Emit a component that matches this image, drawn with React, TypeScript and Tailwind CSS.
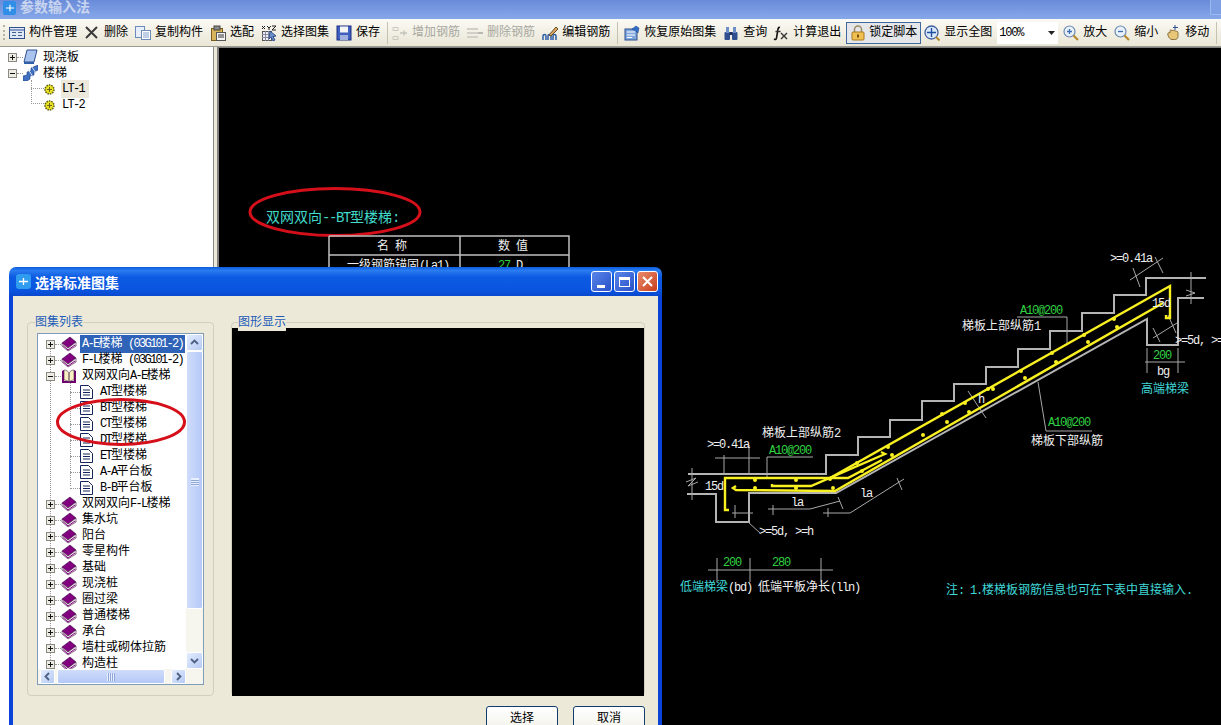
import type { ReactNode } from "react";

const FONT = "font-['Liberation_Mono','Noto_Sans_CJK_SC',monospace]";

// ascii chars are squeezed so mixed text lines up like the scaled bitmap font in the shot
function Txt({ t }: { t: string }) {
  return (
    <>
      {t.split(/([\x00-\x7f]+)/).filter(Boolean).map((s, i) =>
        /[\x00-\x7f]/.test(s) ? (
          <span key={i} className="tracking-[-1.7px]">{s}</span>
        ) : (
          <span key={i}>{s}</span>
        ),
      )}
    </>
  );
}

function Label({ x, y, t, fill = "#f0f0f0", big }: { x: number; y: number; t: string; fill?: string; big?: boolean }) {
  return (
    <text x={x} y={y} fill={fill} className={`${FONT} ${big ? "text-[14px]" : "text-[12px]"}`}>
      {t.split(/([\x00-\x7f]+)/).filter(Boolean).map((s, i) => (
        <tspan key={i} className={/[\x00-\x7f]/.test(s) ? (big ? "tracking-[-1.4px]" : "tracking-[-1.2px]") : ""}>
          {s}
        </tspan>
      ))}
    </text>
  );
}

const Ico = ({ children }: { children: ReactNode }) => (
  <svg viewBox="0 0 16 16" className="w-4 h-4 shrink-0">{children}</svg>
);

const icons: Record<string, ReactNode> = {
  manage: (
    <Ico>
      <rect x="0.5" y="2.5" width="15" height="11" fill="#dfe8f6" stroke="#2f4f8f" />
      <path d="M1 5h14" stroke="#2f4f8f" />
      <path d="M3 7.5h4M3 10.5h4M9 7.5h4M9 10.5h4" stroke="#44608f" />
    </Ico>
  ),
  del: <Ico><path d="M2 2l11 11M13 2L2 13" stroke="#3a3a3a" strokeWidth="2" /></Ico>,
  copy: (
    <Ico>
      <rect x="0.5" y="1.5" width="9" height="11" fill="#e6effa" stroke="#6d8bb8" />
      <rect x="6.5" y="5.5" width="9" height="9" fill="#fff" stroke="#6d8bb8" />
      <path d="M8 8h6M8 10h6M8 12h6" stroke="#7f9fd0" />
    </Ico>
  ),
  match: (
    <Ico>
      <rect x="1.5" y="3.5" width="11" height="12" fill="#d8b45a" stroke="#7a5c1c" />
      <rect x="4" y="1" width="6" height="4" fill="#8a8a8a" stroke="#444" />
      <rect x="6.5" y="7.5" width="9" height="8" fill="#f4f4f4" stroke="#555" />
      <path d="M8 10h6M8 12h6" stroke="#333" />
    </Ico>
  ),
  atlas: (
    <Ico>
      <path d="M1 1l3 3M4 1L1 4M6 1l2 2 2-2M8 3v2M11 1h4l-4 4h4" stroke="#222" fill="none" />
      <rect x="1.5" y="6.5" width="9" height="9" fill="#eef" stroke="#555" />
      <path d="M1 9.5h10M1 12.5h10M4.5 6v10M7.5 6v10" stroke="#889" />
      <path d="M9 6l6 5-3 .5 2 3.5-2 1-2-4-2 2z" fill="#6d8fc8" stroke="#2f4f8f" />
    </Ico>
  ),
  save: (
    <Ico>
      <rect x="1" y="1" width="14" height="14" fill="#3f5fc0" stroke="#1c2f80" />
      <rect x="4" y="1.5" width="8" height="6" fill="#f4f4f4" />
      <rect x="4" y="10" width="8" height="5" fill="#9fb0dc" />
    </Ico>
  ),
  addBar: (
    <Ico>
      <path d="M1 2.5h5v3H1zM1 11.5h5v3H1z" fill="none" stroke="#c8c8c0" />
      <path d="M8 8h7M12 5.5v5" stroke="#c4c4bc" strokeWidth="1.5" />
    </Ico>
  ),
  delBar: (
    <Ico>
      <path d="M0 3h11v2H0zM0 7h11v2H0zM0 11h11v2H0z" fill="#d0d0c8" />
      <path d="M11 8h5" stroke="#b8b8b0" strokeWidth="2" />
    </Ico>
  ),
  editBar: (
    <Ico>
      <path d="M1 15v-4c0-2 3-2 3 0v4M6 15v-4c0-2 3-2 3 0v4M11 15v-4c0-2 3-2 3 0v4" fill="none" stroke="#2f5fa8" strokeWidth="1.5" />
      <path d="M7 10l7-8 2 2-7 7z" fill="#d8a868" stroke="#6b4a20" />
    </Ico>
  ),
  restore: (
    <Ico>
      <rect x="1" y="4" width="12" height="11" fill="#7fa7dc" stroke="#2f4f8f" />
      <path d="M3 7h8M3 10h8M3 12.5h5" stroke="#fff" />
      <path d="M8 4l4-3 3 2-1 5-2-2z" fill="#2f6fc8" stroke="#1c3f80" strokeWidth="0.5" />
    </Ico>
  ),
  query: (
    <Ico>
      <rect x="1.5" y="7" width="5.5" height="8" rx="1" fill="#2f4f8f" />
      <rect x="9" y="7" width="5.5" height="8" rx="1" fill="#2f4f8f" />
      <rect x="3" y="2" width="3" height="6" fill="#6d8fc8" />
      <rect x="10" y="2" width="3" height="6" fill="#6d8fc8" />
      <rect x="6.5" y="7" width="3" height="3" fill="#1c2f60" />
    </Ico>
  ),
  fx: (
    <Ico>
      <path d="M7 2.5C5 2 5 4 4.5 7L3.5 13C3 15 2 14.5 1 14" fill="none" stroke="#111" strokeWidth="1.6" />
      <path d="M2.5 6.5h5M8 8l6 6M14 8l-6 6" stroke="#333" strokeWidth="1.4" />
    </Ico>
  ),
  lock: (
    <Ico>
      <path d="M4.5 7V4.5a3.5 3.5 0 017 0V7" fill="none" stroke="#9a8a60" strokeWidth="1.5" />
      <rect x="2" y="7" width="12" height="8" rx="1" fill="#f0c050" stroke="#a87820" />
      <rect x="7" y="9.5" width="2" height="3" fill="#7a5010" />
    </Ico>
  ),
  fit: (
    <Ico>
      <circle cx="7.5" cy="7.5" r="6.5" fill="#dbe8fa" stroke="#40609f" strokeWidth="1.3" />
      <path d="M7.5 3v9M3 7.5h9" stroke="#1f4f9f" strokeWidth="1.4" />
      <path d="M12 12l3.5 3.5" stroke="#b88a30" strokeWidth="2" />
    </Ico>
  ),
  zoomIn: (
    <Ico>
      <circle cx="6.5" cy="6.5" r="5.5" fill="#e8f0fa" stroke="#6d8bb0" strokeWidth="1.2" />
      <path d="M4 6.5h5M6.5 4v5" stroke="#3f6fb0" strokeWidth="1.3" />
      <path d="M10.5 10.5l4.5 4.5" stroke="#b88a30" strokeWidth="2.2" />
    </Ico>
  ),
  zoomOut: (
    <Ico>
      <circle cx="6.5" cy="6.5" r="5.5" fill="#e8f0fa" stroke="#6d8bb0" strokeWidth="1.2" />
      <path d="M4 6.5h5" stroke="#3f6fb0" strokeWidth="1.3" />
      <path d="M10.5 10.5l4.5 4.5" stroke="#b88a30" strokeWidth="2.2" />
    </Ico>
  ),
  move: (
    <Ico>
      <path d="M3 10c-1-2 1-3 2-2V6c0-1.500 2-1.500 2 0 0-1 2-1 2 0 0-.5 2-.5 2 .5 1-.5 2 0 2 1v4c0 2-1.500 3-3.500 3H7c-2 0-3-2-4-4z" fill="#e8c878" stroke="#8a7040" />
      <path d="M10 0v5M8 2.500h5" stroke="#2f4f8f" />
    </Ico>
  ),
};

type Tool = { icon: string; label: string; off?: boolean; cls?: string };

function ToolItem({ icon, label, off, cls = "" }: Tool) {
  return (
    <div className={`flex items-center gap-1 shrink-0 ${off ? "text-[#a8a8a0]" : "text-black"} ${cls}`}>
      {icons[icon]}
      <span>{label}</span>
    </div>
  );
}

const Sep = ({ cls = "" }: { cls?: string }) => <div className={`w-px h-[22px] bg-[#c5c2b0] shrink-0 ${cls}`} />;

function Toolbar() {
  return (
    <div className={`h-[27px] shrink-0 flex items-center gap-[7px] pl-[9px] text-[12px] overflow-hidden relative bg-linear-to-b from-[#fbfaf4] to-[#e9e6d6] ${FONT}`}>
      <div className="absolute left-[3px] top-[6px] h-[15px] w-[2px] border-l-2 border-dotted border-[#b5b29f]" />
      <ToolItem icon="manage" label="构件管理" />
      <ToolItem icon="del" label="删除" />
      <ToolItem icon="copy" label="复制构件" />
      <ToolItem icon="match" label="选配" />
      <ToolItem icon="atlas" label="选择图集" />
      <ToolItem icon="save" label="保存" />
      <Sep />
      <ToolItem icon="addBar" label="增加钢筋" off cls="-ml-[3px]" />
      <ToolItem icon="delBar" label="删除钢筋" off />
      <ToolItem icon="editBar" label="编辑钢筋" />
      <Sep />
      <ToolItem icon="restore" label="恢复原始图集" cls="-ml-px" />
      <ToolItem icon="query" label="查询" />
      <ToolItem icon="fx" label="计算退出" cls="-ml-px" />
      <div className="flex items-center gap-[3px] h-[22px] w-[75px] -ml-[2px] pl-[3px] border border-[#3f6a9f] bg-[#e4e6ea] shrink-0">
        {icons.lock}
        <span>锁定脚本</span>
      </div>
      <ToolItem icon="fit" label="显示全图" cls="-ml-[4px]" />
      <div className="w-[61px] h-[22px] -ml-[2px] bg-white shrink-0 flex items-center justify-between pl-[2px] pr-[3px]">
        <span className="tracking-[-1.2px]">100%</span>
        <svg viewBox="0 0 7 4" className="w-[7px] h-1"><path d="M0 0h7L3.500 4z" fill="#222" /></svg>
      </div>
      <ToolItem icon="zoomIn" label="放大" cls="-ml-[2px]" />
      <ToolItem icon="zoomOut" label="缩小" />
      <ToolItem icon="move" label="移动" />
      <Sep />
    </div>
  );
}

function Box({ open }: { open?: boolean }) {
  return (
    <svg viewBox="0 0 9 9" className="w-[9px] h-[9px] shrink-0">
      <rect x="0.5" y="0.5" width="8" height="8" fill="#ecebe4" stroke="#8a8a80" />
      <path d={open ? "M2 4.500h5" : "M2 4.500h5M4.500 2v5"} stroke="#111" />
    </svg>
  );
}

const GearIcon = () => (
  <svg viewBox="0 0 11 11" className="w-[11px] h-[11px] shrink-0">
    <circle cx="5.500" cy="5.500" r="4.500" fill="#e8e020" stroke="#5a5a10" strokeDasharray="1.500 1" strokeWidth="1.500" />
    <path d="M3 5.500h5M5.500 3v5" stroke="#6a6a20" />
  </svg>
);

function ProjectTree() {
  return (
    <div className={`w-[214px] shrink-0 bg-white border-r border-[#8a8a8a] pt-[2px] relative text-[12px] text-black ${FONT}`}>
      <div className="absolute left-[31px] top-[33px] h-[24px] w-[13px] border-l border-b border-dotted border-[#999]" />
      <div className="absolute left-[31px] top-[41px] w-[13px] border-b border-dotted border-[#999]" />
      <div className="h-4 flex items-center pl-2 relative">
        <Box />
        <span className="w-[6px] shrink-0 border-b border-dotted border-[#999]" />
        <svg viewBox="0 0 15 16" className="w-[15px] h-4 shrink-0">
          <path d="M4 1h10l-3 12H1z" fill="#a9c4ee" stroke="#2f4f8f" />
          <path d="M1 13h10v2H1z" fill="#2f5fa8" />
        </svg>
        <span className="ml-[5px] pt-px">现浇板</span>
      </div>
      <div className="h-4 flex items-center pl-2">
        <Box open />
        <span className="w-[6px] shrink-0 border-b border-dotted border-[#999]" />
        <svg viewBox="0 0 15 16" className="w-[15px] h-4 shrink-0">
          <path d="M0 16V11l4-1V7l4-1V3l7-3v5l-4 2v3l-4 1v3l-3 2z" fill="#3f6fc0" stroke="#1f3f80" strokeWidth="0.6" />
          <path d="M5 4l5 8M9 2l4 6" stroke="#cfe0f8" />
        </svg>
        <span className="ml-[5px] pt-px">楼梯</span>
      </div>
      <div className="h-4 flex items-center pl-[44px] relative">
        <GearIcon />
        <span className="ml-[6px] px-px w-[28px] bg-[#ece9dc]"><Txt t="LT-1" /></span>
      </div>
      <div className="h-4 flex items-center pl-[44px] relative">
        <GearIcon />
        <span className="ml-[6px] px-px"><Txt t="LT-2" /></span>
      </div>
    </div>
  );
}

const stairs =
  "688,474 826,474 826,455 858,455 858,437 890,437 890,420 922,420 922,401 954,401 954,384 986,384 986,367 1018,367 1018,349 1050,349 1050,331 1082,331 1082,313 1114,313 1114,295 1146,295 1146,278 1206,278";
const soffit =
  "687,494 716,494 716,522 749,522 749,493 836,493 1147,319 1147,345 1178,345 1178,298 1204,298";

const dots = [
  [755, 480], [755, 488], [796, 480], [796, 488], [830, 479], [833, 488], [857, 463], [862, 471], [888, 447], [892, 455],
  [923, 435], [947, 422], [942, 414], [969, 412], [965, 403], [993, 389], [988, 389], [1025, 378], [1021, 371],
  [1056, 362], [1052, 353], [1088, 342], [1084, 335], [1117, 327], [1114, 319],
];

const thin = [
  "715,458 760,458", "724,455 724,474", "749,445 749,474", "692,468 692,500", "686,482 696,478 688,486 698,482",
  "767,477 767,457 813,457", "768,509 810,509 840,501", "773,505 773,515", "838,497 843,509",
  "823,513 850,513 904,479", "828,508 828,517", "897,478 902,490",
  "732,513 753,513", "735,505 735,518", "748,522 760,533",
  "708,570 833,570", "717,558 717,582", "750,558 750,582", "821,558 821,582",
  "1130,280 1163,258", "1133,268 1140,287", "1155,257 1163,273",
  "1191,272 1191,304", "1186,290 1195,293 1186,296",
  "1017,317 1067,317 1067,343", "968,391 986,418", "1038,382 1046,431 1092,431",
  "1145,362 1185,362", "1147,348 1147,373", "1178,348 1178,373",
  "1153,338 1177,323", "1153,328 1160,342", "1168,315 1176,333",
];

function Drawing() {
  return (
    <svg viewBox="219 48 1002 677" className="w-full h-full block">
      <ellipse cx="335" cy="212" rx="85" ry="23.500" fill="none" stroke="#d5101a" strokeWidth="3" />
      <Label x={266} y={222} t="双网双向--BT型楼梯:" fill="#40d8c8" big />
      <path d="M329 236h240v40M329 236v40M329 255h240M460 236v40" fill="none" stroke="#c0c0c0" strokeWidth="1.500" />
      <Label x={377} y={250} t="名  称" />
      <Label x={498} y={250} t="数  值" />
      <Label x={347} y={269} t="一级钢筋锚固(La1)" />
      <Label x={498} y={269} t="27" fill="#30d040" />
      <Label x={516} y={269} t="D" />

      <polyline points={stairs} fill="none" stroke="#b4b4b4" strokeWidth="2" />
      <polyline points={soffit} fill="none" stroke="#b4b4b4" strokeWidth="2" />
      {thin.map((p) => (
        <polyline key={p} points={p} fill="none" stroke="#a8a8a8" strokeWidth="1" />
      ))}
      <g fill="none" stroke="#f8f020" strokeWidth="2.400">
        <polyline points="729,510 725,510 725,478 830,478 1170,286 1170,318 1166,318 1166,315" />
        <polyline points="736,486 733,488 736,490 835,491 1163,303" />
        <polyline points="772,484 772,486 811,486 885,454 881,452" />
        <polyline points="830,478 848,478 882,460" />
      </g>
      {dots.map(([x, y]) => (
        <circle key={`${x}-${y}`} cx={x} cy={y} r="2" fill="#f8f020" />
      ))}

      <Label x={707} y={448} t=">=0.41a" />
      <Label x={762} y={437} t="梯板上部纵筋2" />
      <Label x={769} y={454} t="A10@200" fill="#30d040" />
      <Label x={705} y={490} t="15d" />
      <Label x={791} y={506} t="la" />
      <Label x={860} y={497} t="la" />
      <Label x={759} y={535} t=">=5d, >=h" />
      <Label x={723} y={566} t="200" fill="#30d040" />
      <Label x={772} y={566} t="280" fill="#30d040" />
      <Label x={680} y={591} t="低端梯梁" fill="#40d8d8" />
      <Label x={728} y={591} t="(bd) 低端平板净长(lln)" />
      <Label x={946} y={594} t="注: 1.楼梯板钢筋信息也可在下表中直接输入." fill="#40d8d8" />
      <Label x={1110} y={262} t=">=0.41a" />
      <Label x={1152} y={307} t="15d" />
      <Label x={1020} y={314} t="A10@200" fill="#30d040" />
      <Label x={962} y={330} t="梯板上部纵筋1" />
      <Label x={978} y={403} t="h" />
      <Label x={1048} y={426} t="A10@200" fill="#30d040" />
      <Label x={1031} y={445} t="梯板下部纵筋" />
      <Label x={1153} y={359} t="200" fill="#30d040" />
      <Label x={1157} y={375} t="bg" />
      <Label x={1141} y={393} t="高端梯梁" fill="#40d8d8" />
      <Label x={1175} y={344} t=">=5d, >=h" />
    </svg>
  );
}

const Book = () => (
  <svg viewBox="0 0 16 16" className="w-4 h-4 shrink-0">
    <path d="M1 7l8-6 6 5-8 6z" fill="#800080" stroke="#3a0a3a" strokeWidth="0.6" />
    <path d="M1 7v3l6 5 8-5V6l-8 6z" fill="#f4f0f4" stroke="#3a0a3a" strokeWidth="0.6" />
    <path d="M2 9.500l5 4.500 7-5" fill="none" stroke="#800080" />
  </svg>
);

const OpenBook = () => (
  <svg viewBox="0 0 16 16" className="w-4 h-4 shrink-0">
    <path d="M1 3v12h14V3l-2-1v11H3V2z" fill="#700070" />
    <path d="M3 2c2 0 4 1 5 3v9c-1-1-3-2-5-2zM13 2c-2 0-4 1-5 3v9c1-1 3-2 5-2z" fill="#f8f0c0" stroke="#4a2a4a" strokeWidth="0.6" />
  </svg>
);

const Doc = () => (
  <svg viewBox="0 0 13 14" className="w-[13px] h-[14px] shrink-0">
    <path d="M.5.500h8l4 4v9H.5z" fill="#fff" stroke="#14245c" />
    <path d="M3 5h7M3 7.500h7M3 10h7" stroke="#14245c" />
  </svg>
);

const roots1 = ["双网双向F-L楼梯", "集水坑", "阳台", "零星构件", "基础", "现浇桩", "圈过梁", "普通楼梯", "承台", "墙柱或砌体拉筋", "构造柱"];
const kids = ["AT型楼梯", "BT型楼梯", "CT型楼梯", "DT型楼梯", "ET型楼梯", "A-A平台板", "B-B平台板"];

function RootRow({ label, open, selected }: { label: string; open?: boolean; selected?: boolean }) {
  return (
    <div className="h-4 flex items-center pl-2 relative">
      <Box open={open} />
      <span className="w-[6px] shrink-0 border-b border-dotted border-[#999]" />
      {open ? <OpenBook /> : <Book />}
      <span className={`ml-[3px] px-[2px] whitespace-nowrap ${selected ? "bg-[#2f63b8] text-white" : ""}`}>
        <Txt t={label} />
      </span>
    </div>
  );
}

const ScrollBtn = ({ d, cls = "" }: { d: string; cls?: string }) => (
  <div className={`flex items-center justify-center rounded-[2px] border border-white bg-linear-to-br from-[#e3ecfd] to-[#b6caf3] shrink-0 ${cls}`}>
    <svg viewBox="0 0 9 9" className="w-[9px] h-[9px]">
      <path d={d} fill="none" stroke="#4d6185" strokeWidth="1.800" />
    </svg>
  </div>
);

function AtlasList() {
  return (
    <div className="h-[352px] w-[167px] border border-[#7f9db9] bg-white flex flex-col overflow-hidden">
      <div className="flex h-[335px]">
        <div className="w-[149px] pt-[2px] overflow-hidden relative text-[12px] text-black">
          <div className="absolute left-[12px] top-[8px] h-[330px] border-l border-dotted border-[#999]" />
          <div className="absolute left-[32px] top-[48px] h-[104px] border-l border-dotted border-[#999]" />
          <RootRow label="A-E楼梯 (03G101-2)" selected />
          <RootRow label="F-L楼梯 (03G101-2)" />
          <RootRow label="双网双向A-E楼梯" open />
          {kids.map((k) => (
            <div key={k} className="h-4 flex items-center pl-[32px] relative">
              <span className="w-[10px] shrink-0 border-b border-dotted border-[#999]" />
              <Doc />
              <span className="ml-[7px] whitespace-nowrap"><Txt t={k} /></span>
            </div>
          ))}
          {roots1.map((r) => (
            <RootRow key={r} label={r} />
          ))}
        </div>
        <div className="w-[17px] bg-[#f6f5ee] flex flex-col">
          <ScrollBtn d="M1 6l3.500-3.500L8 6" cls="h-[17px] w-[17px]" />
          <div className="h-[258px] rounded-[2px] border border-white bg-linear-to-r from-[#cfdcfb] to-[#b5c9f7] flex items-end justify-center pb-[122px]">
            <div className="w-[8px] h-[8px] border-y border-[#e8effe] bg-[repeating-linear-gradient(#e8effe_0_1px,#90a8d8_1px_2px)]" />
          </div>
          <div className="flex-1" />
          <ScrollBtn d="M1 3l3.500 3.500L8 3" cls="h-[17px] w-[17px]" />
        </div>
      </div>
      <div className="flex h-[16px] bg-[#f6f5ee] pl-[2px] gap-[2px]">
        <ScrollBtn d="M6 1L2.500 4.500 6 8" cls="w-[15px]" />
        <div className="w-[108px] rounded-[2px] border border-white bg-linear-to-b from-[#cfdcfb] to-[#b5c9f7] flex items-center justify-center">
          <div className="w-[8px] h-[8px] bg-[repeating-linear-gradient(90deg,#e8effe_0_1px,#90a8d8_1px_2px)]" />
        </div>
        <div className="w-[2px]" />
        <ScrollBtn d="M3 1l3.500 3.500L3 8" cls="w-[15px]" />
      </div>
    </div>
  );
}

const WinBtn = ({ cls, children }: { cls: string; children: ReactNode }) => (
  <div className={`w-[21px] h-[21px] rounded-[3px] border border-white flex items-center justify-center ${cls}`}>{children}</div>
);

const DlgBtn = ({ label }: { label: string }) => (
  <div className="w-[72px] h-[30px] rounded-[3px] border border-[#0f3d6e] bg-linear-to-b from-white to-[#f0efe6] pt-[3px] text-center text-[12px] text-black">
    {label}
  </div>
);

function Dialog() {
  return (
    <div className={`absolute left-[9px] top-[267px] w-[653px] h-[480px] flex flex-col ${FONT}`}>
      <div className="h-[29px] shrink-0 rounded-t-[7px] flex items-center pl-[7px] pr-[4px] bg-[linear-gradient(#0a5ce0_0%,#2a7cf0_12%,#0c5ae2_35%,#0a55e0_80%,#0a48cc_100%)]">
        <div className="w-[15px] h-[15px] rounded-[3px] bg-[#2f9cf0] flex items-center justify-center">
          <svg viewBox="0 0 11 11" className="w-[11px] h-[11px]"><path d="M1 5.500h9M5.500 2v7" stroke="#fff" strokeWidth="1.300" /></svg>
        </div>
        <span className="ml-[4px] pt-[2px] text-[14px] font-bold text-white tracking-[0px] font-['Noto_Sans_CJK_SC',sans-serif]">选择标准图集</span>
        <div className="ml-auto flex gap-[2px]">
          <WinBtn cls="bg-linear-to-br from-[#5a86ea] to-[#2a50c8]"><div className="w-[8px] h-[3px] bg-white mt-[9px] -ml-[2px]" /></WinBtn>
          <WinBtn cls="bg-linear-to-br from-[#5a86ea] to-[#2a50c8]"><div className="w-[11px] h-[10px] border border-t-[3px] border-white" /></WinBtn>
          <WinBtn cls="bg-linear-to-br from-[#e88a6a] to-[#c83c18]">
            <svg viewBox="0 0 11 11" className="w-[11px] h-[11px]"><path d="M1 1l9 9M10 1l-9 9" stroke="#fff" strokeWidth="2" /></svg>
          </WinBtn>
        </div>
      </div>
      <div className="flex-1 border-l-4 border-r-[4px] border-[#0a43d8] bg-[#ece9d8] pl-[14px] pr-[12px] pt-[26px]">
        <div className="flex gap-[17px]">
          <div className="w-[187px] h-[374px] rounded-[4px] border border-[#d0d0bf] pl-[9px] pt-[10px] relative">
            <span className="absolute left-[7px] -top-[8px] h-4 leading-4 bg-[#ece9d8] text-[12px] text-[#1c5cb8]">图集列表</span>
            <AtlasList />
          </div>
          <div className="w-[414px] h-[374px] rounded-[4px] border border-[#d0d0bf] pt-[5px] relative">
            <span className="absolute left-[6px] -top-[8px] h-4 leading-4 bg-[#ece9d8] text-[12px] text-[#1c5cb8]">图形显示</span>
            <div className="w-[412px] h-[368px] bg-black" />
          </div>
        </div>
        <div className="flex justify-end gap-[15px] mt-[10px] pr-[1px]">
          <DlgBtn label="选择" />
          <DlgBtn label="取消" />
        </div>
      </div>
    </div>
  );
}

export default function App() {
  return (
    <div className="w-[1221px] h-[725px] flex flex-col overflow-hidden relative bg-[#ece9d8]">
      <div className="h-[19px] shrink-0 flex items-center pl-[3px] overflow-hidden bg-linear-to-b from-[#6a8bd9] to-[#86a8ea]">
        <div className="w-[13px] h-[14px] -mt-[3px] rounded-[2px] bg-[#2f8fe8] flex items-center justify-center">
          <svg viewBox="0 0 11 11" className="w-[10px] h-[10px]"><path d="M1 5.500h9M5.500 2v7" stroke="#fff" strokeWidth="1.300" /></svg>
        </div>
        <span className="ml-1 -mt-[7px] text-[14px] font-bold text-[#c9d5ef] font-['Noto_Sans_CJK_SC',sans-serif]">参数输入法</span>
        <div className="ml-auto w-[11px] h-[15px] -mt-[4px] bg-[#7f9fe4] border-l border-b border-[#9db8ee]" />
      </div>
      <Toolbar />
      <div className="flex-1 flex min-h-0 border-t border-[#9a9a90]">
        <ProjectTree />
        <div className="w-[3px] shrink-0 bg-[#ece9d8]" />
        <div className="flex-1 bg-black border-l-2 border-t border-[#808080] min-w-0">
          <Drawing />
        </div>
      </div>
      <Dialog />
      {/* red mark over the dialog's list */}
      <svg viewBox="0 0 134 52" className="absolute left-[54px] top-[396px] w-[134px] h-[52px] pointer-events-none">
        <ellipse cx="67" cy="26" rx="63.500" ry="22.500" fill="none" stroke="#d5101a" strokeWidth="3" />
      </svg>
    </div>
  );
}
